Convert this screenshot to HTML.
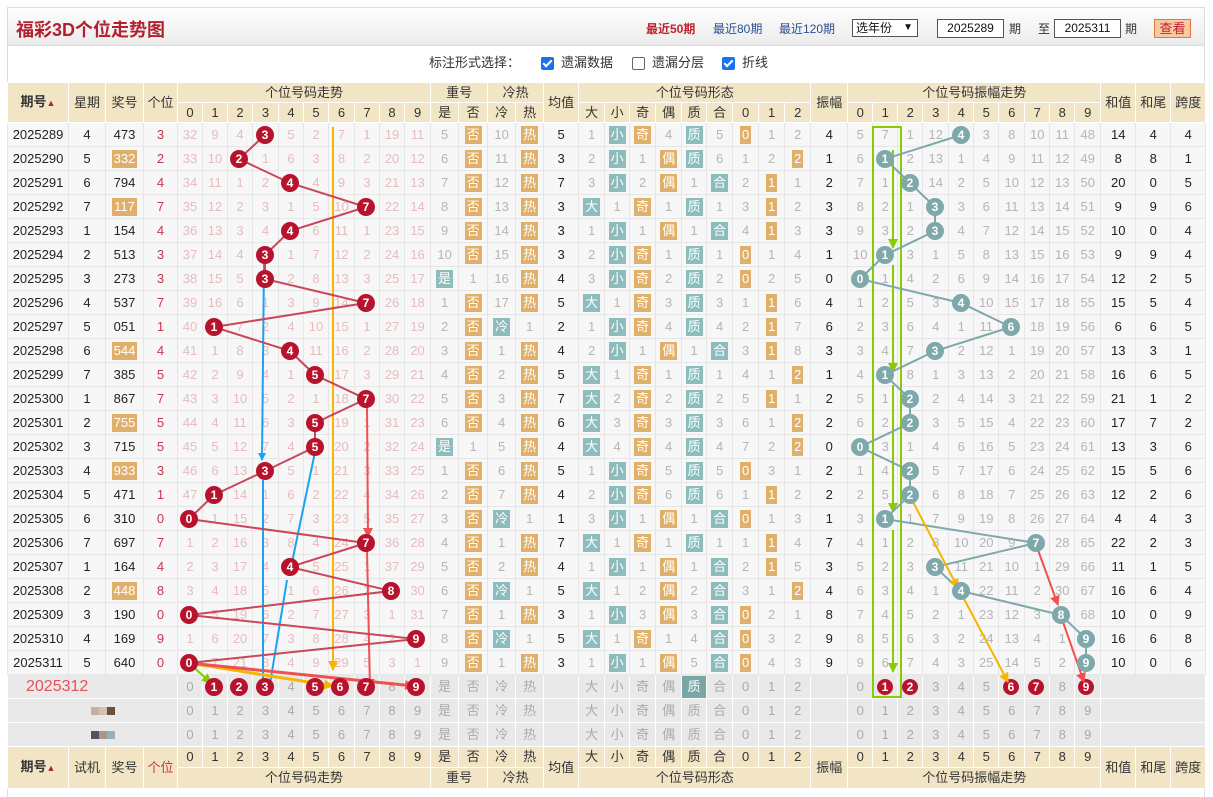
<!DOCTYPE html>
<html><head><meta charset="utf-8">
<style>
*{box-sizing:border-box;margin:0;padding:0}
body{width:1213px;height:791px;background:#fff;font-family:"Liberation Sans","Noto Sans CJK SC",sans-serif;position:relative;overflow:hidden;font-size:13px;color:#333}
#wrap{position:absolute;left:7px;top:7px;width:1198px;height:790px;border:1px solid #ddd;border-bottom:none}
#title{position:absolute;left:0;top:0;width:1196px;height:38px;background:linear-gradient(#fdfdfd,#ececec);border-bottom:1px solid #ddd}
#title h1{position:absolute;left:8px;top:8px;font-size:18px;color:#b3202f;font-weight:bold}
.tl{position:absolute;top:12px;font-size:12px;color:#2c4f8f}
.lb{position:absolute;top:55px;font-size:13px;color:#333;line-height:16px}
.cb{position:absolute;top:57px;width:13px;height:13px;border-radius:2px}
.cb.on{background:#1a73e8}
.cb.on:after{content:"";position:absolute;left:4px;top:1px;width:3px;height:7px;border:solid #fff;border-width:0 2px 2px 0;transform:rotate(45deg)}
.cb.off{border:1px solid #666;background:#fff}
table{position:absolute;left:7px;top:82px;width:1198px;border-collapse:collapse;table-layout:fixed}
td{border:1px solid #e6e6e6;text-align:center;padding:0;line-height:16px;white-space:nowrap;background:#f7f7f7;color:#b5b5b5;font-size:13px}
tr.h td{background:#f1e5c6;border-color:#fff;color:#333;font-size:13px}
tr.h{height:20px}
tr.h2{height:21px}
tr.d{height:24px}
tr.d td:nth-child(-n+3){color:#222}
tr.d td:nth-child(4){color:#c8344c}
tr.d td:nth-child(n+5):nth-child(-n+14){color:#e6bcbc}
tr.d td:nth-child(19),tr.d td:nth-child(29),tr.d td:nth-child(n+40){color:#222}
tr.s td{border-top:1px solid #cfcfcf}
tr.x{height:24px}
tr.x td{background:#e9e9e9;border-color:#fff;color:#aaa}
i{font-style:normal;display:inline-block;padding:0 2px;line-height:18px;color:#fff}
i.o{background:#e0af69}
i.c{background:#8cbcbc}
i.k{background:#7aa6a6;color:#fff;width:24px;line-height:22px}
</style></head><body>
<div id="wrap">
<div id="title"><h1>福彩3D个位走势图</h1>
<span class="tl" style="left:638px;color:#c0202e;font-weight:bold">最近50期</span>
<span class="tl" style="left:705px">最近80期</span>
<span class="tl" style="left:771px">最近120期</span>
<div style="position:absolute;left:844px;top:11px;width:66px;height:18px;border:1px solid #555;background:#fff;font-size:12px;line-height:16px;padding-left:3px;color:#111">选年份 <span style="position:absolute;right:4px;top:0;font-size:10px">&#9660;</span></div>
<div style="position:absolute;left:929px;top:11px;width:67px;height:19px;border:1px solid #555;background:#fff;font-size:12px;line-height:17px;text-align:center;color:#111">2025289</div>
<span class="tl" style="left:1001px;color:#333">期</span>
<span class="tl" style="left:1030px;color:#333">至</span>
<div style="position:absolute;left:1046px;top:11px;width:67px;height:19px;border:1px solid #555;background:#fff;font-size:12px;line-height:17px;text-align:center;color:#111">2025311</div>
<span class="tl" style="left:1117px;color:#333">期</span>
<div style="position:absolute;left:1146px;top:11px;width:37px;height:19px;border:1px solid #e07a3a;background:#fbc8a0;font-size:13px;line-height:17px;text-align:center;color:#c0202e">查看</div>
</div>
</div>
<span class="lb" style="left:429px">标注形式选择：</span>
<div class="cb on" style="left:541px"></div><span class="lb" style="left:561px">遗漏数据</span>
<div class="cb off" style="left:632px"></div><span class="lb" style="left:652px">遗漏分层</span>
<div class="cb on" style="left:722px"></div><span class="lb" style="left:742px">折线</span>

<table>
<colgroup><col style="width:61px"><col style="width:37px"><col style="width:38px"><col style="width:34px">
<col style="width:25px"><col style="width:25px"><col style="width:25px"><col style="width:26px"><col style="width:25px"><col style="width:25px"><col style="width:26px"><col style="width:25px"><col style="width:25px"><col style="width:26px">
<col style="width:28px"><col style="width:29px"><col style="width:28px"><col style="width:28px"><col style="width:35px">
<col style="width:26px"><col style="width:25px"><col style="width:26px"><col style="width:26px"><col style="width:25px"><col style="width:26px"><col style="width:26px"><col style="width:26px"><col style="width:26px">
<col style="width:37px">
<col style="width:25px"><col style="width:25px"><col style="width:25px"><col style="width:26px"><col style="width:25px"><col style="width:25px"><col style="width:26px"><col style="width:25px"><col style="width:25px"><col style="width:26px">
<col style="width:35px"><col style="width:35px"><col style="width:35px"></colgroup>
<tr class="h"><td rowspan="2"><b>期号</b><span style="color:#b3202f;font-size:9px">&#9650;</span></td><td rowspan="2">星期</td><td rowspan="2">奖号</td><td rowspan="2">个位</td><td colspan="10">个位号码走势</td><td colspan="2">重号</td><td colspan="2">冷热</td><td rowspan="2">均值</td><td colspan="9">个位号码形态</td><td rowspan="2">振幅</td><td colspan="10">个位号码振幅走势</td><td rowspan="2">和值</td><td rowspan="2">和尾</td><td rowspan="2">跨度</td></tr>
<tr class="h"><td>0</td><td>1</td><td>2</td><td>3</td><td>4</td><td>5</td><td>6</td><td>7</td><td>8</td><td>9</td><td>是</td><td>否</td><td>冷</td><td>热</td><td>大</td><td>小</td><td>奇</td><td>偶</td><td>质</td><td>合</td><td>0</td><td>1</td><td>2</td><td>0</td><td>1</td><td>2</td><td>3</td><td>4</td><td>5</td><td>6</td><td>7</td><td>8</td><td>9</td></tr>
<tr class="d"><td>2025289</td><td>4</td><td>473</td><td>3</td><td>32</td><td>9</td><td>4</td><td></td><td>5</td><td>2</td><td>7</td><td>1</td><td>19</td><td>11</td><td>5</td><td><i class="o">否</i></td><td>10</td><td><i class="o">热</i></td><td>5</td><td>1</td><td><i class="c">小</i></td><td><i class="o">奇</i></td><td>4</td><td><i class="c">质</i></td><td>5</td><td><i class="o">0</i></td><td>1</td><td>2</td><td>4</td><td>5</td><td>7</td><td>1</td><td>12</td><td></td><td>3</td><td>8</td><td>10</td><td>11</td><td>48</td><td>14</td><td>4</td><td>4</td></tr>
<tr class="d"><td>2025290</td><td>5</td><td><i class="o">332</i></td><td>2</td><td>33</td><td>10</td><td></td><td>1</td><td>6</td><td>3</td><td>8</td><td>2</td><td>20</td><td>12</td><td>6</td><td><i class="o">否</i></td><td>11</td><td><i class="o">热</i></td><td>3</td><td>2</td><td><i class="c">小</i></td><td>1</td><td><i class="o">偶</i></td><td><i class="c">质</i></td><td>6</td><td>1</td><td>2</td><td><i class="o">2</i></td><td>1</td><td>6</td><td></td><td>2</td><td>13</td><td>1</td><td>4</td><td>9</td><td>11</td><td>12</td><td>49</td><td>8</td><td>8</td><td>1</td></tr>
<tr class="d"><td>2025291</td><td>6</td><td>794</td><td>4</td><td>34</td><td>11</td><td>1</td><td>2</td><td></td><td>4</td><td>9</td><td>3</td><td>21</td><td>13</td><td>7</td><td><i class="o">否</i></td><td>12</td><td><i class="o">热</i></td><td>7</td><td>3</td><td><i class="c">小</i></td><td>2</td><td><i class="o">偶</i></td><td>1</td><td><i class="c">合</i></td><td>2</td><td><i class="o">1</i></td><td>1</td><td>2</td><td>7</td><td>1</td><td></td><td>14</td><td>2</td><td>5</td><td>10</td><td>12</td><td>13</td><td>50</td><td>20</td><td>0</td><td>5</td></tr>
<tr class="d"><td>2025292</td><td>7</td><td><i class="o">117</i></td><td>7</td><td>35</td><td>12</td><td>2</td><td>3</td><td>1</td><td>5</td><td>10</td><td></td><td>22</td><td>14</td><td>8</td><td><i class="o">否</i></td><td>13</td><td><i class="o">热</i></td><td>3</td><td><i class="c">大</i></td><td>1</td><td><i class="o">奇</i></td><td>1</td><td><i class="c">质</i></td><td>1</td><td>3</td><td><i class="o">1</i></td><td>2</td><td>3</td><td>8</td><td>2</td><td>1</td><td></td><td>3</td><td>6</td><td>11</td><td>13</td><td>14</td><td>51</td><td>9</td><td>9</td><td>6</td></tr>
<tr class="d"><td>2025293</td><td>1</td><td>154</td><td>4</td><td>36</td><td>13</td><td>3</td><td>4</td><td></td><td>6</td><td>11</td><td>1</td><td>23</td><td>15</td><td>9</td><td><i class="o">否</i></td><td>14</td><td><i class="o">热</i></td><td>3</td><td>1</td><td><i class="c">小</i></td><td>1</td><td><i class="o">偶</i></td><td>1</td><td><i class="c">合</i></td><td>4</td><td><i class="o">1</i></td><td>3</td><td>3</td><td>9</td><td>3</td><td>2</td><td></td><td>4</td><td>7</td><td>12</td><td>14</td><td>15</td><td>52</td><td>10</td><td>0</td><td>4</td></tr>
<tr class="d s"><td>2025294</td><td>2</td><td>513</td><td>3</td><td>37</td><td>14</td><td>4</td><td></td><td>1</td><td>7</td><td>12</td><td>2</td><td>24</td><td>16</td><td>10</td><td><i class="o">否</i></td><td>15</td><td><i class="o">热</i></td><td>3</td><td>2</td><td><i class="c">小</i></td><td><i class="o">奇</i></td><td>1</td><td><i class="c">质</i></td><td>1</td><td><i class="o">0</i></td><td>1</td><td>4</td><td>1</td><td>10</td><td></td><td>3</td><td>1</td><td>5</td><td>8</td><td>13</td><td>15</td><td>16</td><td>53</td><td>9</td><td>9</td><td>4</td></tr>
<tr class="d"><td>2025295</td><td>3</td><td>273</td><td>3</td><td>38</td><td>15</td><td>5</td><td></td><td>2</td><td>8</td><td>13</td><td>3</td><td>25</td><td>17</td><td><i class="c">是</i></td><td>1</td><td>16</td><td><i class="o">热</i></td><td>4</td><td>3</td><td><i class="c">小</i></td><td><i class="o">奇</i></td><td>2</td><td><i class="c">质</i></td><td>2</td><td><i class="o">0</i></td><td>2</td><td>5</td><td>0</td><td></td><td>1</td><td>4</td><td>2</td><td>6</td><td>9</td><td>14</td><td>16</td><td>17</td><td>54</td><td>12</td><td>2</td><td>5</td></tr>
<tr class="d"><td>2025296</td><td>4</td><td>537</td><td>7</td><td>39</td><td>16</td><td>6</td><td>1</td><td>3</td><td>9</td><td>14</td><td></td><td>26</td><td>18</td><td>1</td><td><i class="o">否</i></td><td>17</td><td><i class="o">热</i></td><td>5</td><td><i class="c">大</i></td><td>1</td><td><i class="o">奇</i></td><td>3</td><td><i class="c">质</i></td><td>3</td><td>1</td><td><i class="o">1</i></td><td>6</td><td>4</td><td>1</td><td>2</td><td>5</td><td>3</td><td></td><td>10</td><td>15</td><td>17</td><td>18</td><td>55</td><td>15</td><td>5</td><td>4</td></tr>
<tr class="d"><td>2025297</td><td>5</td><td>051</td><td>1</td><td>40</td><td></td><td>7</td><td>2</td><td>4</td><td>10</td><td>15</td><td>1</td><td>27</td><td>19</td><td>2</td><td><i class="o">否</i></td><td><i class="c">冷</i></td><td>1</td><td>2</td><td>1</td><td><i class="c">小</i></td><td><i class="o">奇</i></td><td>4</td><td><i class="c">质</i></td><td>4</td><td>2</td><td><i class="o">1</i></td><td>7</td><td>6</td><td>2</td><td>3</td><td>6</td><td>4</td><td>1</td><td>11</td><td></td><td>18</td><td>19</td><td>56</td><td>6</td><td>6</td><td>5</td></tr>
<tr class="d"><td>2025298</td><td>6</td><td><i class="o">544</i></td><td>4</td><td>41</td><td>1</td><td>8</td><td>3</td><td></td><td>11</td><td>16</td><td>2</td><td>28</td><td>20</td><td>3</td><td><i class="o">否</i></td><td>1</td><td><i class="o">热</i></td><td>4</td><td>2</td><td><i class="c">小</i></td><td>1</td><td><i class="o">偶</i></td><td>1</td><td><i class="c">合</i></td><td>3</td><td><i class="o">1</i></td><td>8</td><td>3</td><td>3</td><td>4</td><td>7</td><td></td><td>2</td><td>12</td><td>1</td><td>19</td><td>20</td><td>57</td><td>13</td><td>3</td><td>1</td></tr>
<tr class="d s"><td>2025299</td><td>7</td><td>385</td><td>5</td><td>42</td><td>2</td><td>9</td><td>4</td><td>1</td><td></td><td>17</td><td>3</td><td>29</td><td>21</td><td>4</td><td><i class="o">否</i></td><td>2</td><td><i class="o">热</i></td><td>5</td><td><i class="c">大</i></td><td>1</td><td><i class="o">奇</i></td><td>1</td><td><i class="c">质</i></td><td>1</td><td>4</td><td>1</td><td><i class="o">2</i></td><td>1</td><td>4</td><td></td><td>8</td><td>1</td><td>3</td><td>13</td><td>2</td><td>20</td><td>21</td><td>58</td><td>16</td><td>6</td><td>5</td></tr>
<tr class="d"><td>2025300</td><td>1</td><td>867</td><td>7</td><td>43</td><td>3</td><td>10</td><td>5</td><td>2</td><td>1</td><td>18</td><td></td><td>30</td><td>22</td><td>5</td><td><i class="o">否</i></td><td>3</td><td><i class="o">热</i></td><td>7</td><td><i class="c">大</i></td><td>2</td><td><i class="o">奇</i></td><td>2</td><td><i class="c">质</i></td><td>2</td><td>5</td><td><i class="o">1</i></td><td>1</td><td>2</td><td>5</td><td>1</td><td></td><td>2</td><td>4</td><td>14</td><td>3</td><td>21</td><td>22</td><td>59</td><td>21</td><td>1</td><td>2</td></tr>
<tr class="d"><td>2025301</td><td>2</td><td><i class="o">755</i></td><td>5</td><td>44</td><td>4</td><td>11</td><td>6</td><td>3</td><td></td><td>19</td><td>1</td><td>31</td><td>23</td><td>6</td><td><i class="o">否</i></td><td>4</td><td><i class="o">热</i></td><td>6</td><td><i class="c">大</i></td><td>3</td><td><i class="o">奇</i></td><td>3</td><td><i class="c">质</i></td><td>3</td><td>6</td><td>1</td><td><i class="o">2</i></td><td>2</td><td>6</td><td>2</td><td></td><td>3</td><td>5</td><td>15</td><td>4</td><td>22</td><td>23</td><td>60</td><td>17</td><td>7</td><td>2</td></tr>
<tr class="d"><td>2025302</td><td>3</td><td>715</td><td>5</td><td>45</td><td>5</td><td>12</td><td>7</td><td>4</td><td></td><td>20</td><td>2</td><td>32</td><td>24</td><td><i class="c">是</i></td><td>1</td><td>5</td><td><i class="o">热</i></td><td>4</td><td><i class="c">大</i></td><td>4</td><td><i class="o">奇</i></td><td>4</td><td><i class="c">质</i></td><td>4</td><td>7</td><td>2</td><td><i class="o">2</i></td><td>0</td><td></td><td>3</td><td>1</td><td>4</td><td>6</td><td>16</td><td>5</td><td>23</td><td>24</td><td>61</td><td>13</td><td>3</td><td>6</td></tr>
<tr class="d"><td>2025303</td><td>4</td><td><i class="o">933</i></td><td>3</td><td>46</td><td>6</td><td>13</td><td></td><td>5</td><td>1</td><td>21</td><td>3</td><td>33</td><td>25</td><td>1</td><td><i class="o">否</i></td><td>6</td><td><i class="o">热</i></td><td>5</td><td>1</td><td><i class="c">小</i></td><td><i class="o">奇</i></td><td>5</td><td><i class="c">质</i></td><td>5</td><td><i class="o">0</i></td><td>3</td><td>1</td><td>2</td><td>1</td><td>4</td><td></td><td>5</td><td>7</td><td>17</td><td>6</td><td>24</td><td>25</td><td>62</td><td>15</td><td>5</td><td>6</td></tr>
<tr class="d s"><td>2025304</td><td>5</td><td>471</td><td>1</td><td>47</td><td></td><td>14</td><td>1</td><td>6</td><td>2</td><td>22</td><td>4</td><td>34</td><td>26</td><td>2</td><td><i class="o">否</i></td><td>7</td><td><i class="o">热</i></td><td>4</td><td>2</td><td><i class="c">小</i></td><td><i class="o">奇</i></td><td>6</td><td><i class="c">质</i></td><td>6</td><td>1</td><td><i class="o">1</i></td><td>2</td><td>2</td><td>2</td><td>5</td><td></td><td>6</td><td>8</td><td>18</td><td>7</td><td>25</td><td>26</td><td>63</td><td>12</td><td>2</td><td>6</td></tr>
<tr class="d"><td>2025305</td><td>6</td><td>310</td><td>0</td><td></td><td>1</td><td>15</td><td>2</td><td>7</td><td>3</td><td>23</td><td>5</td><td>35</td><td>27</td><td>3</td><td><i class="o">否</i></td><td><i class="c">冷</i></td><td>1</td><td>1</td><td>3</td><td><i class="c">小</i></td><td>1</td><td><i class="o">偶</i></td><td>1</td><td><i class="c">合</i></td><td><i class="o">0</i></td><td>1</td><td>3</td><td>1</td><td>3</td><td></td><td>1</td><td>7</td><td>9</td><td>19</td><td>8</td><td>26</td><td>27</td><td>64</td><td>4</td><td>4</td><td>3</td></tr>
<tr class="d"><td>2025306</td><td>7</td><td>697</td><td>7</td><td>1</td><td>2</td><td>16</td><td>3</td><td>8</td><td>4</td><td>24</td><td></td><td>36</td><td>28</td><td>4</td><td><i class="o">否</i></td><td>1</td><td><i class="o">热</i></td><td>7</td><td><i class="c">大</i></td><td>1</td><td><i class="o">奇</i></td><td>1</td><td><i class="c">质</i></td><td>1</td><td>1</td><td><i class="o">1</i></td><td>4</td><td>7</td><td>4</td><td>1</td><td>2</td><td>8</td><td>10</td><td>20</td><td>9</td><td></td><td>28</td><td>65</td><td>22</td><td>2</td><td>3</td></tr>
<tr class="d"><td>2025307</td><td>1</td><td>164</td><td>4</td><td>2</td><td>3</td><td>17</td><td>4</td><td></td><td>5</td><td>25</td><td>1</td><td>37</td><td>29</td><td>5</td><td><i class="o">否</i></td><td>2</td><td><i class="o">热</i></td><td>4</td><td>1</td><td><i class="c">小</i></td><td>1</td><td><i class="o">偶</i></td><td>1</td><td><i class="c">合</i></td><td>2</td><td><i class="o">1</i></td><td>5</td><td>3</td><td>5</td><td>2</td><td>3</td><td></td><td>11</td><td>21</td><td>10</td><td>1</td><td>29</td><td>66</td><td>11</td><td>1</td><td>5</td></tr>
<tr class="d"><td>2025308</td><td>2</td><td><i class="o">448</i></td><td>8</td><td>3</td><td>4</td><td>18</td><td>5</td><td>1</td><td>6</td><td>26</td><td>2</td><td></td><td>30</td><td>6</td><td><i class="o">否</i></td><td><i class="c">冷</i></td><td>1</td><td>5</td><td><i class="c">大</i></td><td>1</td><td>2</td><td><i class="o">偶</i></td><td>2</td><td><i class="c">合</i></td><td>3</td><td>1</td><td><i class="o">2</i></td><td>4</td><td>6</td><td>3</td><td>4</td><td>1</td><td></td><td>22</td><td>11</td><td>2</td><td>30</td><td>67</td><td>16</td><td>6</td><td>4</td></tr>
<tr class="d s"><td>2025309</td><td>3</td><td>190</td><td>0</td><td></td><td>5</td><td>19</td><td>6</td><td>2</td><td>7</td><td>27</td><td>3</td><td>1</td><td>31</td><td>7</td><td><i class="o">否</i></td><td>1</td><td><i class="o">热</i></td><td>3</td><td>1</td><td><i class="c">小</i></td><td>3</td><td><i class="o">偶</i></td><td>3</td><td><i class="c">合</i></td><td><i class="o">0</i></td><td>2</td><td>1</td><td>8</td><td>7</td><td>4</td><td>5</td><td>2</td><td>1</td><td>23</td><td>12</td><td>3</td><td></td><td>68</td><td>10</td><td>0</td><td>9</td></tr>
<tr class="d"><td>2025310</td><td>4</td><td>169</td><td>9</td><td>1</td><td>6</td><td>20</td><td>7</td><td>3</td><td>8</td><td>28</td><td>4</td><td>2</td><td></td><td>8</td><td><i class="o">否</i></td><td><i class="c">冷</i></td><td>1</td><td>5</td><td><i class="c">大</i></td><td>1</td><td><i class="o">奇</i></td><td>1</td><td>4</td><td><i class="c">合</i></td><td><i class="o">0</i></td><td>3</td><td>2</td><td>9</td><td>8</td><td>5</td><td>6</td><td>3</td><td>2</td><td>24</td><td>13</td><td>4</td><td>1</td><td></td><td>16</td><td>6</td><td>8</td></tr>
<tr class="d"><td>2025311</td><td>5</td><td>640</td><td>0</td><td></td><td>7</td><td>21</td><td>8</td><td>4</td><td>9</td><td>29</td><td>5</td><td>3</td><td>1</td><td>9</td><td><i class="o">否</i></td><td>1</td><td><i class="o">热</i></td><td>3</td><td>1</td><td><i class="c">小</i></td><td>1</td><td><i class="o">偶</i></td><td>5</td><td><i class="c">合</i></td><td><i class="o">0</i></td><td>4</td><td>3</td><td>9</td><td>9</td><td>6</td><td>7</td><td>4</td><td>3</td><td>25</td><td>14</td><td>5</td><td>2</td><td></td><td>10</td><td>0</td><td>6</td></tr>
<tr class="x"><td colspan="4" style="text-align:left;padding-left:18px;color:#e8505a;font-size:16px">2025312</td><td>0</td><td></td><td></td><td></td><td>4</td><td></td><td></td><td></td><td>8</td><td></td><td>是</td><td>否</td><td>冷</td><td>热</td><td></td><td>大</td><td>小</td><td>奇</td><td>偶</td><td style="padding:0"><i class="k">质</i></td><td>合</td><td>0</td><td>1</td><td>2</td><td></td><td>0</td><td></td><td></td><td>3</td><td>4</td><td>5</td><td></td><td></td><td>8</td><td></td><td colspan="3"></td></tr>
<tr class="x"><td colspan="4"><span style="display:inline-block;width:8px;height:8px;background:#c4b0a4;margin-left:20px"></span><span style="display:inline-block;width:8px;height:8px;background:#d8c0a8"></span><span style="display:inline-block;width:8px;height:8px;background:#6b5040"></span></td><td>0</td><td>1</td><td>2</td><td>3</td><td>4</td><td>5</td><td>6</td><td>7</td><td>8</td><td>9</td><td>是</td><td>否</td><td>冷</td><td>热</td><td></td><td>大</td><td>小</td><td>奇</td><td>偶</td><td>质</td><td>合</td><td>0</td><td>1</td><td>2</td><td></td><td>0</td><td>1</td><td>2</td><td>3</td><td>4</td><td>5</td><td>6</td><td>7</td><td>8</td><td>9</td><td colspan="3"></td></tr>
<tr class="x"><td colspan="4"><span style="display:inline-block;width:8px;height:8px;background:#5a5058;margin-left:20px"></span><span style="display:inline-block;width:8px;height:8px;background:#a89890"></span><span style="display:inline-block;width:8px;height:8px;background:#9ab0c0"></span></td><td>0</td><td>1</td><td>2</td><td>3</td><td>4</td><td>5</td><td>6</td><td>7</td><td>8</td><td>9</td><td>是</td><td>否</td><td>冷</td><td>热</td><td></td><td>大</td><td>小</td><td>奇</td><td>偶</td><td>质</td><td>合</td><td>0</td><td>1</td><td>2</td><td></td><td>0</td><td>1</td><td>2</td><td>3</td><td>4</td><td>5</td><td>6</td><td>7</td><td>8</td><td>9</td><td colspan="3"></td></tr>
<tr class="h h2"><td rowspan="2"><b>期号</b><span style="color:#b3202f;font-size:9px">&#9650;</span></td><td rowspan="2">试机</td><td rowspan="2">奖号</td><td rowspan="2" style="color:#c8344c">个位</td><td>0</td><td>1</td><td>2</td><td>3</td><td>4</td><td>5</td><td>6</td><td>7</td><td>8</td><td>9</td><td>是</td><td>否</td><td>冷</td><td>热</td><td rowspan="2">均值</td><td>大</td><td>小</td><td>奇</td><td>偶</td><td>质</td><td>合</td><td>0</td><td>1</td><td>2</td><td rowspan="2">振幅</td><td>0</td><td>1</td><td>2</td><td>3</td><td>4</td><td>5</td><td>6</td><td>7</td><td>8</td><td>9</td><td rowspan="2">和值</td><td rowspan="2">和尾</td><td rowspan="2">跨度</td></tr>
<tr class="h h2"><td colspan="10">个位号码走势</td><td colspan="2">重号</td><td colspan="2">冷热</td><td colspan="9">个位号码形态</td><td colspan="10">个位号码振幅走势</td></tr>
</table>

<svg style="position:absolute;left:0;top:0" width="1213" height="791" font-family="Liberation Sans, sans-serif" font-weight="bold" font-size="12" text-anchor="middle">
<defs>
<marker id="ab" markerWidth="8" markerHeight="8" refX="7" refY="4" orient="auto" markerUnits="userSpaceOnUse"><path d="M0,0 L8,4 L0,8 z" fill="#1aa3f0"/></marker>
<marker id="ao" markerWidth="10" markerHeight="10" refX="9" refY="5" orient="auto" markerUnits="userSpaceOnUse"><path d="M0,0 L10,5 L0,10 z" fill="#f7b500"/></marker>
<marker id="ar" markerWidth="10" markerHeight="10" refX="9" refY="5" orient="auto" markerUnits="userSpaceOnUse"><path d="M0,0 L10,5 L0,10 z" fill="#f05050"/></marker>
<marker id="ag" markerWidth="10" markerHeight="10" refX="9" refY="5" orient="auto" markerUnits="userSpaceOnUse"><path d="M0,0 L10,5 L0,10 z" fill="#88cc00"/></marker>
</defs>
<line x1="333" y1="127" x2="333" y2="670" stroke="#f7b500" stroke-width="2" marker-end="url(#ao)"/>
<line x1="264" y1="262" x2="262" y2="460" stroke="#1aa3f0" stroke-width="2" marker-end="url(#ab)"/>
<line x1="263" y1="480" x2="263" y2="690" stroke="#1aa3f0" stroke-width="2" marker-end="url(#ab)"/>
<line x1="315" y1="452" x2="290" y2="572" stroke="#1aa3f0" stroke-width="2" marker-end="url(#ab)"/>
<line x1="287" y1="580" x2="269" y2="690" stroke="#1aa3f0" stroke-width="2" marker-end="url(#ab)"/>
<line x1="367" y1="405" x2="368" y2="537" stroke="#f05050" stroke-width="2" marker-end="url(#ar)"/>
<line x1="367" y1="550" x2="370" y2="688" stroke="#f05050" stroke-width="2" marker-end="url(#ar)"/>
<polyline fill="none" stroke="#c8485a" stroke-width="2" points="265,135 239,159 290,183 366,207 290,231 265,255 265,279 366,303 214,327 290,351 315,375 366,399 315,423 315,447 265,471 214,495 189,519 366,543 290,567 391,591 189,615 416,639 189,663"/>
<line x1="189" y1="663" x2="333" y2="686" stroke="#f7b500" stroke-width="3" marker-end="url(#ao)"/>
<line x1="189" y1="663" x2="414" y2="686" stroke="#f05050" stroke-width="3" marker-end="url(#ar)"/>
<line x1="189" y1="663" x2="211" y2="683" stroke="#88cc00" stroke-width="2" marker-end="url(#ag)"/>
<g fill="#b8132c"><circle cx="265" cy="135" r="9"/><circle cx="239" cy="159" r="9"/><circle cx="290" cy="183" r="9"/><circle cx="366" cy="207" r="9"/><circle cx="290" cy="231" r="9"/><circle cx="265" cy="255" r="9"/><circle cx="265" cy="279" r="9"/><circle cx="366" cy="303" r="9"/><circle cx="214" cy="327" r="9"/><circle cx="290" cy="351" r="9"/><circle cx="315" cy="375" r="9"/><circle cx="366" cy="399" r="9"/><circle cx="315" cy="423" r="9"/><circle cx="315" cy="447" r="9"/><circle cx="265" cy="471" r="9"/><circle cx="214" cy="495" r="9"/><circle cx="189" cy="519" r="9"/><circle cx="366" cy="543" r="9"/><circle cx="290" cy="567" r="9"/><circle cx="391" cy="591" r="9"/><circle cx="189" cy="615" r="9"/><circle cx="416" cy="639" r="9"/><circle cx="189" cy="663" r="9"/>
<circle cx="214" cy="687" r="9"/><circle cx="239" cy="687" r="9"/><circle cx="265" cy="687" r="9"/><circle cx="315" cy="687" r="9"/><circle cx="340" cy="687" r="9"/><circle cx="366" cy="687" r="9"/><circle cx="416" cy="687" r="9"/>
<circle cx="885" cy="687" r="8"/><circle cx="910" cy="687" r="8"/><circle cx="1011" cy="687" r="8"/><circle cx="1036" cy="687" r="8"/><circle cx="1086" cy="687" r="8"/></g>
<g fill="#fff"><text x="265" y="139">3</text><text x="239" y="163">2</text><text x="290" y="187">4</text><text x="366" y="211">7</text><text x="290" y="235">4</text><text x="265" y="259">3</text><text x="265" y="283">3</text><text x="366" y="307">7</text><text x="214" y="331">1</text><text x="290" y="355">4</text><text x="315" y="379">5</text><text x="366" y="403">7</text><text x="315" y="427">5</text><text x="315" y="451">5</text><text x="265" y="475">3</text><text x="214" y="499">1</text><text x="189" y="523">0</text><text x="366" y="547">7</text><text x="290" y="571">4</text><text x="391" y="595">8</text><text x="189" y="619">0</text><text x="416" y="643">9</text><text x="189" y="667">0</text>
<text x="214" y="691">1</text><text x="239" y="691">2</text><text x="265" y="691">3</text><text x="315" y="691">5</text><text x="340" y="691">6</text><text x="366" y="691">7</text><text x="416" y="691">9</text>
<text x="885" y="691">1</text><text x="910" y="691">2</text><text x="1011" y="691">6</text><text x="1036" y="691">7</text><text x="1086" y="691">9</text></g>
<rect x="873" y="127" width="28" height="570" fill="none" stroke="#88cc00" stroke-width="2"/>
<line x1="893" y1="150" x2="893" y2="248" stroke="#88cc00" stroke-width="2" marker-end="url(#ag)"/>
<line x1="893" y1="265" x2="893" y2="372" stroke="#88cc00" stroke-width="2" marker-end="url(#ag)"/>
<line x1="893" y1="385" x2="893" y2="512" stroke="#88cc00" stroke-width="2" marker-end="url(#ag)"/>
<line x1="893" y1="530" x2="893" y2="672" stroke="#88cc00" stroke-width="2" marker-end="url(#ag)"/>
<polyline fill="none" stroke="#7fa8ab" stroke-width="2" points="961,135 885,159 910,183 935,207 935,231 885,255 860,279 961,303 1011,327 935,351 885,375 910,399 910,423 860,447 910,471 910,495 885,519 1036,543 935,567 961,591 1061,615 1086,639 1086,663"/>
<line x1="912" y1="500" x2="958" y2="588" stroke="#f7b500" stroke-width="2" marker-end="url(#ao)"/>
<line x1="963" y1="597" x2="1008" y2="682" stroke="#f7b500" stroke-width="2" marker-end="url(#ao)"/>
<line x1="1038" y1="550" x2="1058" y2="605" stroke="#f05050" stroke-width="2" marker-end="url(#ar)"/>
<line x1="1063" y1="622" x2="1084" y2="682" stroke="#f05050" stroke-width="2" marker-end="url(#ar)"/>
<g fill="#7fa8ab"><circle cx="961" cy="135" r="9"/><circle cx="885" cy="159" r="9"/><circle cx="910" cy="183" r="9"/><circle cx="935" cy="207" r="9"/><circle cx="935" cy="231" r="9"/><circle cx="885" cy="255" r="9"/><circle cx="860" cy="279" r="9"/><circle cx="961" cy="303" r="9"/><circle cx="1011" cy="327" r="9"/><circle cx="935" cy="351" r="9"/><circle cx="885" cy="375" r="9"/><circle cx="910" cy="399" r="9"/><circle cx="910" cy="423" r="9"/><circle cx="860" cy="447" r="9"/><circle cx="910" cy="471" r="9"/><circle cx="910" cy="495" r="9"/><circle cx="885" cy="519" r="9"/><circle cx="1036" cy="543" r="9"/><circle cx="935" cy="567" r="9"/><circle cx="961" cy="591" r="9"/><circle cx="1061" cy="615" r="9"/><circle cx="1086" cy="639" r="9"/><circle cx="1086" cy="663" r="9"/></g>
<g fill="#fff"><text x="961" y="139">4</text><text x="885" y="163">1</text><text x="910" y="187">2</text><text x="935" y="211">3</text><text x="935" y="235">3</text><text x="885" y="259">1</text><text x="860" y="283">0</text><text x="961" y="307">4</text><text x="1011" y="331">6</text><text x="935" y="355">3</text><text x="885" y="379">1</text><text x="910" y="403">2</text><text x="910" y="427">2</text><text x="860" y="451">0</text><text x="910" y="475">2</text><text x="910" y="499">2</text><text x="885" y="523">1</text><text x="1036" y="547">7</text><text x="935" y="571">3</text><text x="961" y="595">4</text><text x="1061" y="619">8</text><text x="1086" y="643">9</text><text x="1086" y="667">9</text></g>
</svg>
</body></html>
